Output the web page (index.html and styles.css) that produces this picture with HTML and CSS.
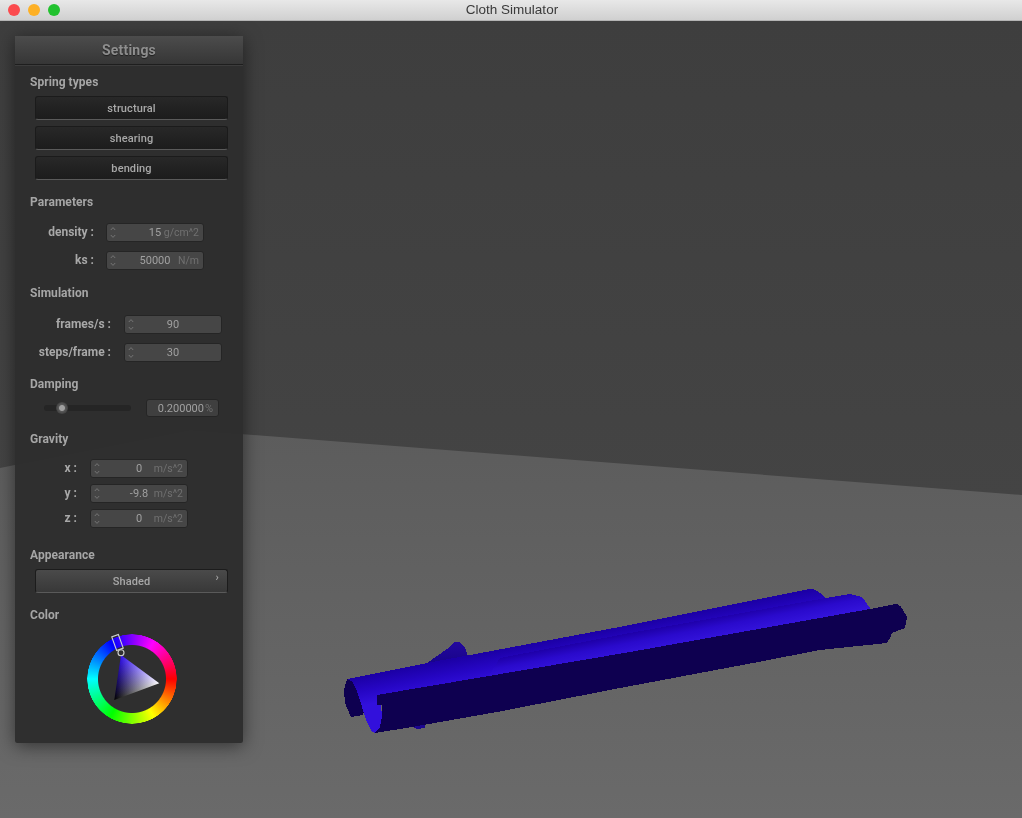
FILE: index.html
```html
<!DOCTYPE html>
<html lang="en">
<head>
<meta charset="utf-8">
<title>Cloth Simulator</title>
<link rel="stylesheet" href="styles.css">
</head>
<body>
<div class="window">
  <header class="titlebar">
    <div class="lights"><i class="light red"></i><i class="light yellow"></i><i class="light green"></i></div>
    <span class="title">Cloth Simulator</span>
  </header>
  <main class="viewport">
    <svg class="scene" viewBox="0 21 1022 797" preserveAspectRatio="none">
      <defs>
        <linearGradient id="wall" x1="0" y1="0" x2="0" y2="1"><stop offset="0" stop-color="#3e3e3e"/><stop offset="1" stop-color="#484848"/></linearGradient>
        <linearGradient id="floor" x1="0" y1="0" x2="0" y2="1"><stop offset="0" stop-color="#5c5c5c"/><stop offset="1" stop-color="#6a6a6a"/></linearGradient>
        <linearGradient id="tube1" gradientUnits="userSpaceOnUse" x1="620" y1="627" x2="625.4" y2="655"><stop offset="0" stop-color="#1c00a6"/><stop offset=".5" stop-color="#2606c4"/><stop offset="1" stop-color="#3210dc"/></linearGradient>
        <linearGradient id="tube2" gradientUnits="userSpaceOnUse" x1="620" y1="635" x2="624" y2="656"><stop offset="0" stop-color="#1e00a8"/><stop offset=".45" stop-color="#2a0acc"/><stop offset="1" stop-color="#3414dc"/></linearGradient>
        <linearGradient id="hump" x1="0" y1="0" x2="0" y2="1"><stop offset="0" stop-color="#23089e"/><stop offset="1" stop-color="#18048a"/></linearGradient>
      </defs>
      <rect y="21" width="1022" height="797" fill="url(#wall)"/>
      <polygon points="0,468 190,430 1022,495 1022,818 0,818" fill="url(#floor)"/>
      <g class="mesh">
        <path d="M427 663 L447 649 L455 642 L460 642 L465 648 L468 656 Z" fill="url(#hump)"/>
        <path d="M412 726 L425 724 L425 728 L417 729 Z" fill="#1c0690"/>
        <path d="M347 679 L344 690 L345 703 L351 717 L363 715 L370 690 Z" fill="#0e0050"/>
        <path d="M347 679 L427 663 L470 655 L630 625 L810 589 Q818 589 825 598 L836 618 L400 705 L381 705 L382 716 L380 727 L375 733 L372 732 Q366 722 362 707 Q358 692 353 683 Q351 680 347 679 Z" fill="url(#tube1)"/>
        <path d="M500 658 L630 633 L826 598 L850 594 L862 597 L870 608 L875 620 L620 660 L480 690 Z" fill="url(#tube2)"/>
        <path d="M377 695 L630 652 L870 609 L895 604 Q900 604 903 610 L907 617 L905 628 L892 633 L890 638 L887 643 L820 650 L753 663 L620 688 L497 712 L412 727 L375 733 L380 727 L382 717 L382 705 L377 705 Z" fill="#0e0050"/>
      </g>
    </svg>
    <section class="panel">
      <h1 class="panel-title">Settings</h1>
      <div class="panel-body">
        <h2 class="group first">Spring types</h2>
        <button class="btn toggled">structural</button>
        <button class="btn toggled">shearing</button>
        <button class="btn toggled">bending</button>

        <h2 class="group g-params">Parameters</h2>
        <div class="row param-row">
          <label class="lbl w-params">density :</label>
          <div class="num box"><span class="spin"><svg viewBox="0 0 6 13"><path d="M.8 4 3 1.6 5.2 4M.8 9 3 11.4 5.2 9"/></svg></span><span class="val">15</span><span class="unit">g/cm^2</span></div>
        </div>
        <div class="row param-row">
          <label class="lbl w-params">ks :</label>
          <div class="num box"><span class="spin"><svg viewBox="0 0 6 13"><path d="M.8 4 3 1.6 5.2 4M.8 9 3 11.4 5.2 9"/></svg></span><span class="val">50000</span><span class="unit">N/m</span></div>
        </div>

        <h2 class="group g-sim">Simulation</h2>
        <div class="row param-row">
          <label class="lbl w-sim">frames/s :</label>
          <div class="num box"><span class="spin"><svg viewBox="0 0 6 13"><path d="M.8 4 3 1.6 5.2 4M.8 9 3 11.4 5.2 9"/></svg></span><span class="val">90</span></div>
        </div>
        <div class="row param-row">
          <label class="lbl w-sim">steps/frame :</label>
          <div class="num box"><span class="spin"><svg viewBox="0 0 6 13"><path d="M.8 4 3 1.6 5.2 4M.8 9 3 11.4 5.2 9"/></svg></span><span class="val">30</span></div>
        </div>

        <h2 class="group g-damp">Damping</h2>
        <div class="row damp-row">
          <div class="slider"><i class="knob"></i></div>
          <div class="num damp"><span class="val">0.200000</span><span class="unit pct">%</span></div>
        </div>

        <h2 class="group g-grav">Gravity</h2>
        <div class="row grav-row">
          <label class="lbl w-grav">x :</label>
          <div class="num box"><span class="spin"><svg viewBox="0 0 6 13"><path d="M.8 4 3 1.6 5.2 4M.8 9 3 11.4 5.2 9"/></svg></span><span class="val">0</span><span class="unit">m/s^2</span></div>
        </div>
        <div class="row grav-row">
          <label class="lbl w-grav">y :</label>
          <div class="num box"><span class="spin"><svg viewBox="0 0 6 13"><path d="M.8 4 3 1.6 5.2 4M.8 9 3 11.4 5.2 9"/></svg></span><span class="val">-9.8</span><span class="unit">m/s^2</span></div>
        </div>
        <div class="row grav-row">
          <label class="lbl w-grav">z :</label>
          <div class="num box"><span class="spin"><svg viewBox="0 0 6 13"><path d="M.8 4 3 1.6 5.2 4M.8 9 3 11.4 5.2 9"/></svg></span><span class="val">0</span><span class="unit">m/s^2</span></div>
        </div>

        <h2 class="group g-app">Appearance</h2>
        <button class="btn popup">Shaded<span class="chev">›</span></button>

        <h2 class="group g-color">Color</h2>
        <div class="wheel-wrap">
          <div class="wheel">
            <div class="ring"></div>
            <svg class="tri" viewBox="0 0 90 90">
              <defs>
                <linearGradient id="hue" gradientUnits="userSpaceOnUse" x1="34" y1="21" x2="47.9" y2="58.4"><stop offset="0" stop-color="#3414f0"/><stop offset="1" stop-color="#000"/></linearGradient>
                <linearGradient id="white" gradientUnits="userSpaceOnUse" x1="72.3" y1="49.3" x2="30.7" y2="43.1"><stop offset="0" stop-color="#fff"/><stop offset="1" stop-color="#000"/></linearGradient>
              </defs>
              <polygon points="34,21 72.3,49.3 27.3,66" fill="#000"/>
              <polygon class="add" points="34,21 72.3,49.3 27.3,66" fill="url(#hue)"/>
              <polygon class="add" points="34,21 72.3,49.3 27.3,66" fill="url(#white)"/>
              <rect class="handle" x="27" y="1.2" width="7" height="14.6" transform="rotate(-19.6 30.5 8.5)"/>
              <circle class="handle" cx="34" cy="18.7" r="3"/>
            </svg>
          </div>
        </div>
      </div>
    </section>
  </main>
</div>
</body>
</html>
```

FILE: styles.css
```css
* { box-sizing: border-box; }
html, body { margin: 0; height: 100%; }
body { font-family: Roboto, "Liberation Sans", sans-serif; background: #3f3f3f; overflow: hidden; }
.window { width: 1022px; height: 818px; display: flex; flex-direction: column; }

.titlebar {
  height: 21px; flex: none; position: relative; display: flex; align-items: center; justify-content: center;
  background: linear-gradient(#e8e8e8, #d0d0d0); border-bottom: 1px solid #b4b4b4;
}
.title { font: 13.5px/20px "Liberation Sans", sans-serif; color: #3a3a3a; padding-left: 2px; }
.lights { position: absolute; left: 8px; top: 4px; display: flex; gap: 8px; }
.light { width: 12px; height: 12px; border-radius: 50%; display: block; }
.red { background: #fb4b4e; }
.yellow { background: #fdb025; }
.green { background: #22c22f; }

.viewport { flex: 1; position: relative; padding: 15px 0 0 15px; overflow: hidden; }
.scene { position: absolute; inset: 0; width: 100%; height: 100%; display: block; }
.mesh path { shape-rendering: crispEdges; }

.panel {
  position: relative; width: 228px; height: 707px; border-radius: 2px;
  background: rgba(45, 45, 45, .97);
  box-shadow: 0 3px 18px rgba(0, 0, 0, .5);
  color: #b4b4b4;
}
.panel-title {
  margin: 0; height: 29px; font-size: 14px; font-weight: 700; line-height: 29px; text-align: center; color: #8e8e8e;
  letter-spacing: .2px; background: linear-gradient(#4c4c4c, #363636); border-bottom: 1px solid #1e1e1e;
  box-shadow: 0 1px 0 #3c3c3c; text-shadow: 0 1px 1px rgba(0, 0, 0, .5);
}
.panel-body { padding: 0 15px; display: flex; flex-direction: column; align-items: flex-start; }

.group { margin: 0; font-size: 12px; line-height: 16px; font-weight: 700; color: #a6a6a6; letter-spacing: .05px; }
.first { margin-top: 9px; margin-bottom: 6px; }
.g-params { margin-top: 8px; margin-bottom: 12px; }
.g-sim { margin-bottom: 13px; }
.g-damp { margin-bottom: 6px; }
.g-grav { margin-top: 13px; margin-bottom: 11px; }
.g-app { margin-bottom: 6px; }
.g-color { margin-top: 14px; margin-bottom: 11px; }

.btn {
  display: block; position: relative; width: 193px; height: 24px; margin: 0 0 6px 5px; padding: 2px 0 0; border: 1px solid #1b1b1b; border-bottom-color: #5a5a5a; border-radius: 3px;
  font: 500 11px/20px Roboto, sans-serif; color: #a8a8a8; letter-spacing: .1px; text-align: center;
}
.toggled { background: linear-gradient(#282828, #1c1c1c); }
.popup { background: linear-gradient(#4a4a4a, #383838); border-color: #1c1c1c; border-bottom-color: #5a5a5a; }
.chev { position: absolute; right: 8px; top: -2px; font-size: 11px; color: #a8a8a8; }
.g-app + .btn { margin-bottom: 0; }

.row { display: flex; align-items: center; }
.lbl { font-size: 12px; font-weight: 700; color: #a8a8a8; text-align: right; white-space: nowrap; flex: none; }
.w-params { width: 64px; margin-right: 12px; }
.w-sim { width: 81px; margin-right: 13px; }
.w-grav { width: 47px; margin-right: 13px; }

.param-row { height: 20px; margin-bottom: 8px; }
.param-row + .g-sim { margin-top: 7px; }
.param-row + .g-damp { margin-top: 6px; }
.grav-row { height: 20px; margin-bottom: 5px; }
.grav-row + .g-app { margin-top: 14px; }

.num {
  height: 19px; border: 1px solid #252525; border-radius: 3px;
  background: #464646; font-size: 11px; font-weight: 400; color: #a0a0a0; flex: none;
}
.box { display: grid; grid-template-columns: 1fr auto 1fr; align-items: center; width: 98px; }
.spin { padding-left: 3px; display: flex; }
.spin svg { width: 6px; height: 13px; fill: none; stroke: #808080; stroke-width: .8; display: block; }
.unit { color: #707070; font-size: 10.5px; justify-self: end; padding-right: 4px; }

.damp-row { height: 20px; margin-left: 14px; }
.slider { width: 87px; height: 6px; border-radius: 3px; background: #252525; position: relative; margin-right: 15px; }
.knob {
  position: absolute; left: 12px; top: -3px; width: 12px; height: 12px; border-radius: 50%;
  background: radial-gradient(circle, #a0a0a0 0 2.5px, #585858 3.5px, #404040 6px);
}
.damp { display: flex; align-items: center; justify-content: flex-end; width: 73px; height: 18px; padding-right: 5px; background: #3f3f3f; }
.pct { margin-left: 1px; padding-right: 0; font-size: 11px; }

.wheel-wrap { align-self: stretch; display: flex; justify-content: center; padding-left: 5px; }
.wheel { width: 90px; height: 90px; position: relative; }
.ring {
  width: 100%; height: 100%; border-radius: 50%;
  background: conic-gradient(from 30deg, #f0f, #f00, #ff0, #0f0, #0ff, #00f, #f0f);
  -webkit-mask: radial-gradient(circle, transparent 33.5px, #000 34.5px, #000 44.5px, transparent 45px);
  mask: radial-gradient(circle, transparent 33.5px, #000 34.5px, #000 44.5px, transparent 45px);
}
.tri { position: absolute; inset: 0; width: 100%; height: 100%; overflow: visible; }
.add { mix-blend-mode: plus-lighter; }
.handle { fill: none; stroke: #cfcfcf; stroke-width: 1.1; }
```
